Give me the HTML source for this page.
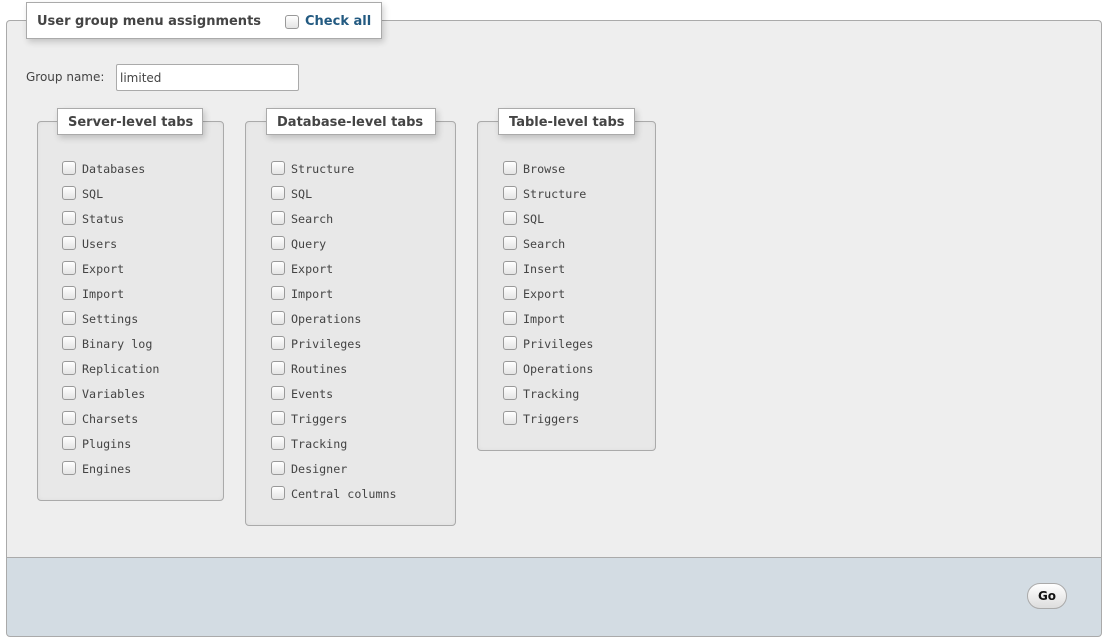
<!DOCTYPE html>
<html><head><style>
body{margin:0;width:1105px;height:641px;background:#fff;position:relative;font-family:"DejaVu Sans","Liberation Sans",sans-serif;overflow:hidden}
.abs{position:absolute;box-sizing:border-box}
.main{left:6px;top:20px;width:1096px;height:538px;background:#eee;border:1px solid #aaa;border-bottom:none;border-radius:4px 4px 0 0}
.foot{left:6px;top:557px;width:1096px;height:80px;background:#d3dce3;border:1px solid #aaa;border-radius:0 0 4px 4px}
.leg{background:#fff;border:1px solid #aaa;box-shadow:2px 3px 6px rgba(0,0,0,.18);font-weight:bold;font-size:13px;color:#444;line-height:27px;padding-left:10px}
.fs{border:1px solid #aaa;border-radius:4px;background:#e8e8e8;box-shadow:inset 0 0 4px rgba(0,0,0,.05)}
.cb{position:absolute;width:14px;height:14px;box-sizing:border-box;border:1px solid #999;border-radius:3px;background:linear-gradient(#fff,#e4e4e4)}
.it{position:absolute;font-family:"DejaVu Sans Mono","Liberation Mono",monospace;font-size:11.7px;color:#444;line-height:14px}
.go{left:1027px;top:583px;width:40px;height:26px;border:1px solid #aaa;border-radius:13px;background:linear-gradient(#fff,#ddd);font-weight:bold;font-size:12px;text-align:center;line-height:25px;color:#111}
</style></head><body>
<div class="abs main"></div>
<div class="abs foot"></div>
<div class="abs leg" style="left:26px;top:2px;width:356px;height:37px;line-height:37px">User group menu assignments
<span class="cb" style="left:258px;top:12px"></span><span style="position:absolute;left:278px;top:0;color:#235a81">Check all</span></div>
<div class="abs" style="left:26px;top:70px;font-size:12px;color:#444">Group name:</div>
<div class="abs" style="left:116px;top:64px;width:183px;height:27px;background:#fff;border:1px solid #aaa;border-radius:2px;font-size:12px;color:#444;padding:6px 0 0 3px">limited</div>

<div class="abs fs" style="left:37px;top:121px;width:187px;height:380px"></div>
<div class="abs leg" style="left:57px;top:108px;width:146px;height:27px">Server-level tabs</div>
<div class="abs fs" style="left:245px;top:121px;width:211px;height:405px"></div>
<div class="abs leg" style="left:266px;top:108px;width:170px;height:27px">Database-level tabs</div>
<div class="abs fs" style="left:477px;top:121px;width:179px;height:330px"></div>
<div class="abs leg" style="left:498px;top:108px;width:137px;height:27px">Table-level tabs</div>

<div id="lists"></div>
<div class="abs go">Go</div>
<script>
var cols=[[62,["Databases","SQL","Status","Users","Export","Import","Settings","Binary log","Replication","Variables","Charsets","Plugins","Engines"]],
[271,["Structure","SQL","Search","Query","Export","Import","Operations","Privileges","Routines","Events","Triggers","Tracking","Designer","Central columns"]],
[503,["Browse","Structure","SQL","Search","Insert","Export","Import","Privileges","Operations","Tracking","Triggers"]]];
var h="";cols.forEach(function(c){c[1].forEach(function(t,i){var y=161+i*25;h+='<span class="cb" style="left:'+c[0]+'px;top:'+y+'px"></span><span class="it" style="left:'+(c[0]+20)+'px;top:'+(y+1)+'px">'+t+'</span>';});});
document.getElementById("lists").innerHTML=h;
</script>
</body></html>
